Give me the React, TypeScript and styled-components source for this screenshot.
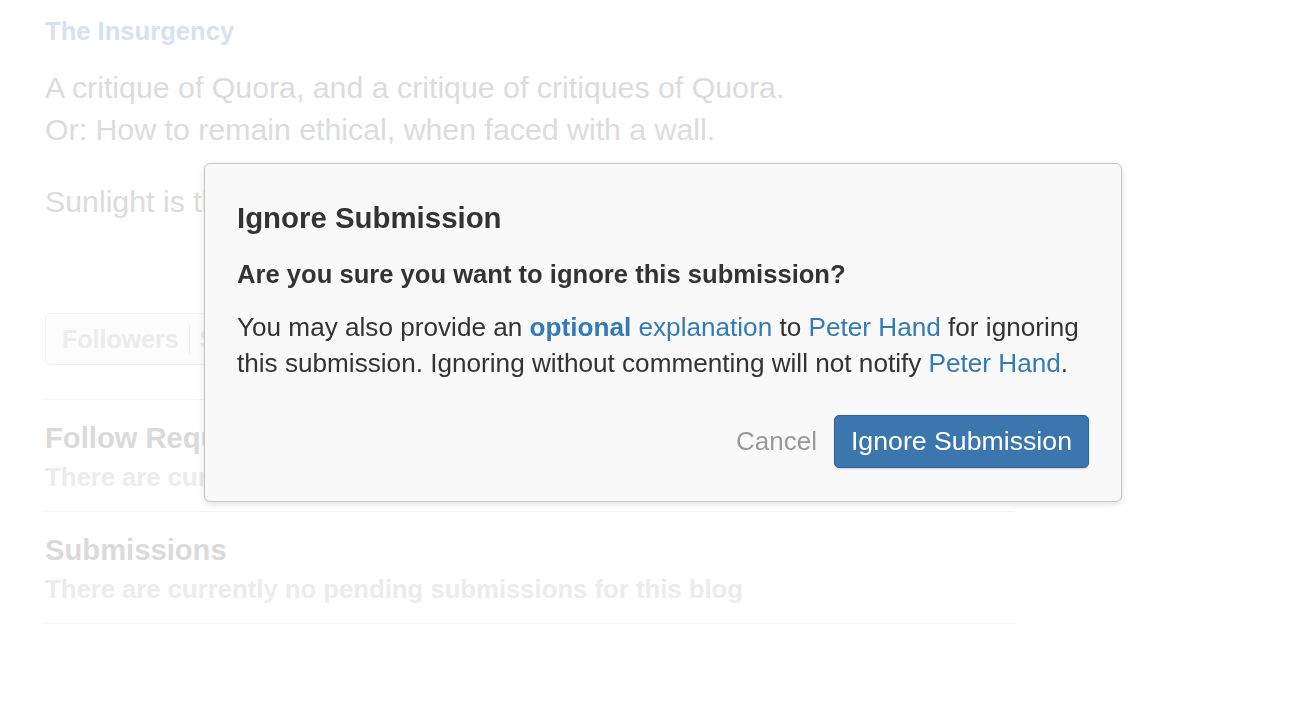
import styled, { createGlobalStyle } from "styled-components";

const GlobalStyle = createGlobalStyle`
  html, body {
    margin: 0;
    padding: 0;
    background: #ffffff;
    font-family: "Liberation Sans", Arial, Helvetica, sans-serif;
  }
`;

const faded = {
  title: "#d5e2f1",
  text: "#dcdcdc",
  heading: "#dadada",
  muted: "#ececec",
  rule: "#f4f4f4",
};

const Page = styled.div`
  padding: 13px 0 0 45px;
  width: 970px;
`;

const BlogTitle = styled.div`
  font-size: 25.6px;
  line-height: 36px;
  font-weight: bold;
  color: ${faded.title};
`;

const Tagline = styled.p`
  margin: ${(p: { $top: number }) => p.$top}px 0 0;
  font-size: 30.3px;
  line-height: 42px;
  color: ${faded.text};
`;

const Tabs = styled.div`
  margin-top: 90px;
  display: inline-flex;
  align-items: center;
  height: 50px;
  border: 1px solid #f3f3f3;
  border-radius: 5px;
  background: #fdfdfd;
  padding: 0 16px;
`;

const Tab = styled.span`
  font-size: 25px;
  font-weight: bold;
  color: ${faded.muted};
  padding: 0 10px;

  &:first-child {
    padding-left: 0;
  }

  & + & {
    border-left: 1px solid #f0f0f0;
  }
`;

const Sections = styled.div`
  margin-top: 34px;
  border-bottom: 1px solid ${faded.rule};
`;

const Section = styled.section`
  border-top: 1px solid ${faded.rule};
  padding: 20px 0 16px;
`;

const SectionHeading = styled.div`
  font-size: 29.2px;
  line-height: 36px;
  font-weight: bold;
  color: ${faded.heading};
`;

const SectionNote = styled.div`
  margin-top: 3px;
  font-size: 25.7px;
  line-height: 36px;
  font-weight: bold;
  color: ${faded.muted};
`;

const Backdrop = styled.div`
  position: fixed;
  inset: 0;
  padding: 163px 0 0 204px;
`;

const Modal = styled.div`
  width: 852px;
  padding: 36px 32px 33px;
  background: #f9f9f9;
  border: 1px solid #c6c6c6;
  border-radius: 6px;
  box-shadow: 0 2px 6px rgba(0, 0, 0, 0.12);
  color: #333333;
`;

const ModalTitle = styled.h4`
  margin: 0;
  font-size: 29.4px;
  line-height: 36px;
  font-weight: bold;
`;

const Question = styled.p`
  margin: 20px 0 0;
  font-size: 25.6px;
  line-height: 36px;
  font-weight: bold;
`;

const Body = styled.p`
  margin: 17px 0 0;
  font-size: 26.15px;
  line-height: 36px;
`;

const Link = styled.a`
  color: #337ab7;
  text-decoration: none;
  font-weight: ${(p: { $strong?: boolean }) => (p.$strong ? "bold" : "normal")};
`;

const Actions = styled.div`
  margin-top: 34px;
  display: flex;
  justify-content: flex-end;
  align-items: center;
  gap: 17px;
`;

const CancelButton = styled.button`
  background: none;
  border: none;
  padding: 0;
  font-family: inherit;
  font-size: 26px;
  color: #999999;
  cursor: pointer;
`;

const PrimaryButton = styled.button`
  height: 53px;
  padding: 0 16px;
  font-family: inherit;
  font-size: 26.7px;
  color: #ffffff;
  background: #3c76ae;
  border: 1px solid #2f62a0;
  border-radius: 5px;
  box-shadow: 0 1px 2px rgba(0, 0, 0, 0.15);
  cursor: pointer;
`;

export default function App() {
  return (
    <>
      <GlobalStyle />
      <Page>
        <BlogTitle>The Insurgency</BlogTitle>
        <Tagline $top={18}>
          A critique of Quora, and a critique of critiques of Quora.
          <br />
          Or: How to remain ethical, when faced with a wall.
        </Tagline>
        <Tagline $top={30}>Sunlight is the best disinfectant.</Tagline>
        <div>
          <Tabs>
            <Tab>Followers</Tab>
            <Tab>Submissions</Tab>
          </Tabs>
        </div>
        <Sections>
          <Section>
            <SectionHeading>Follow Requests</SectionHeading>
            <SectionNote>There are currently no pending follow requests for this blog</SectionNote>
          </Section>
          <Section>
            <SectionHeading>Submissions</SectionHeading>
            <SectionNote>There are currently no pending submissions for this blog</SectionNote>
          </Section>
        </Sections>
      </Page>
      <Backdrop>
        <Modal>
          <ModalTitle>Ignore Submission</ModalTitle>
          <Question>Are you sure you want to ignore this submission?</Question>
          <Body>
            You may also provide an <Link $strong>optional</Link> <Link>explanation</Link> to{" "}
            <Link>Peter Hand</Link> for ignoring this submission. Ignoring without commenting will not
            notify <Link>Peter Hand</Link>.
          </Body>
          <Actions>
            <CancelButton>Cancel</CancelButton>
            <PrimaryButton>Ignore Submission</PrimaryButton>
          </Actions>
        </Modal>
      </Backdrop>
    </>
  );
}
